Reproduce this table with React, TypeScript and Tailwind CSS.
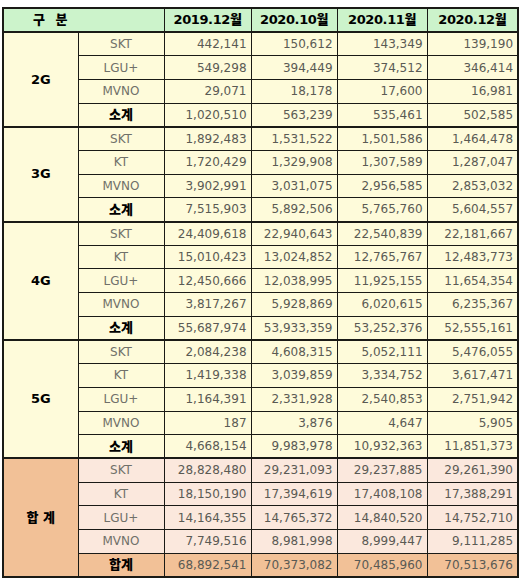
import React from 'react'

type Group = {
  name: string
  rows: [string, string[]][]
  total: string[]
  sum?: boolean
}

const groups: Group[] = [
  {
    name: '2G',
    rows: [
      ['SKT', ['442,141', '150,612', '143,349', '139,190']],
      ['LGU+', ['549,298', '394,449', '374,512', '346,414']],
      ['MVNO', ['29,071', '18,178', '17,600', '16,981']],
    ],
    total: ['1,020,510', '563,239', '535,461', '502,585'],
  },
  {
    name: '3G',
    rows: [
      ['SKT', ['1,892,483', '1,531,522', '1,501,586', '1,464,478']],
      ['KT', ['1,720,429', '1,329,908', '1,307,589', '1,287,047']],
      ['MVNO', ['3,902,991', '3,031,075', '2,956,585', '2,853,032']],
    ],
    total: ['7,515,903', '5,892,506', '5,765,760', '5,604,557'],
  },
  {
    name: '4G',
    rows: [
      ['SKT', ['24,409,618', '22,940,643', '22,540,839', '22,181,667']],
      ['KT', ['15,010,423', '13,024,852', '12,765,767', '12,483,773']],
      ['LGU+', ['12,450,666', '12,038,995', '11,925,155', '11,654,354']],
      ['MVNO', ['3,817,267', '5,928,869', '6,020,615', '6,235,367']],
    ],
    total: ['55,687,974', '53,933,359', '53,252,376', '52,555,161'],
  },
  {
    name: '5G',
    rows: [
      ['SKT', ['2,084,238', '4,608,315', '5,052,111', '5,476,055']],
      ['KT', ['1,419,338', '3,039,859', '3,334,752', '3,617,471']],
      ['LGU+', ['1,164,391', '2,331,928', '2,540,853', '2,751,942']],
      ['MVNO', ['187', '3,876', '4,647', '5,905']],
    ],
    total: ['4,668,154', '9,983,978', '10,932,363', '11,851,373'],
  },
  {
    name: '합 계',
    sum: true,
    rows: [
      ['SKT', ['28,828,480', '29,231,093', '29,237,885', '29,261,390']],
      ['KT', ['18,150,190', '17,394,619', '17,408,108', '17,388,291']],
      ['LGU+', ['14,164,355', '14,765,372', '14,840,520', '14,752,710']],
      ['MVNO', ['7,749,516', '8,981,998', '8,999,447', '9,111,285']],
    ],
    total: ['68,892,541', '70,373,082', '70,485,960', '70,513,676'],
  },
]

const months = ['2019.12월', '2020.10월', '2020.11월', '2020.12월']

const kr = "font-['DejaVu_Sans','Noto_Sans_CJK_KR',sans-serif]"

export default function App() {
  return (
    <div className="w-[519px] h-[580px] bg-white pt-[7px] pl-[2px] overflow-hidden">
      <table
        className={`border-collapse table-fixed w-[515px] border-2 border-[#1a1a16] text-[12px] ${kr}`}
      >
        <colgroup>
          <col className="w-[75px]" />
          <col className="w-[86px]" />
          <col className="w-[87px]" />
          <col className="w-[86px]" />
          <col className="w-[90px]" />
          <col className="w-[91px]" />
        </colgroup>
        <thead>
          <tr className="h-[24px] bg-[#ccf3cb]">
            <th
              colSpan={2}
              className="border-b-2 border-r border-[#1a1a16] font-black text-[13px] text-black text-left pl-[29px] tracking-[3px]"
            >
              구 분
            </th>
            {months.map((m) => (
              <th
                key={m}
                className="border-b-2 border-r border-[#1a1a16] font-black text-[13px] text-black tracking-[-0.4px]"
              >
                {m}
              </th>
            ))}
          </tr>
        </thead>
        {groups.map((g) => (
          <tbody key={g.name} className="border-b-2 border-[#1a1a16]">
            {g.rows.map(([label, vals], i) => (
              <tr
                key={label}
                className={`h-[23.7px] ${g.sum ? 'bg-[#fbe8dd]' : 'bg-[#fefbda]'}`}
              >
                {i === 0 && (
                  <td
                    rowSpan={g.rows.length + 1}
                    className={`border-r border-[#1a1a16] text-center font-black text-[13px] text-black ${
                      g.sum ? 'bg-[#f2c197]' : 'bg-[#fefbda]'
                    }`}
                  >
                    {g.name}
                  </td>
                )}
                <td className="border-r border-b border-[#1a1a16] text-center text-[#707069]">
                  {label}
                </td>
                {vals.map((v, j) => (
                  <td
                    key={j}
                    className="border-r border-b border-[#1a1a16] text-right pr-[4px] text-[#5a5a54]"
                  >
                    {v}
                  </td>
                ))}
              </tr>
            ))}
            <tr className={`h-[23.7px] ${g.sum ? 'bg-[#f2c197]' : 'bg-[#fefbda]'}`}>
              <td className="border-r border-[#1a1a16] text-center font-black text-[13px] text-black">
                {g.sum ? '합계' : '소계'}
              </td>
              {g.total.map((v, j) => (
                <td
                  key={j}
                  className="border-r border-[#1a1a16] text-right pr-[4px] text-[#5a5a54]"
                >
                  {v}
                </td>
              ))}
            </tr>
          </tbody>
        ))}
      </table>
    </div>
  )
}
